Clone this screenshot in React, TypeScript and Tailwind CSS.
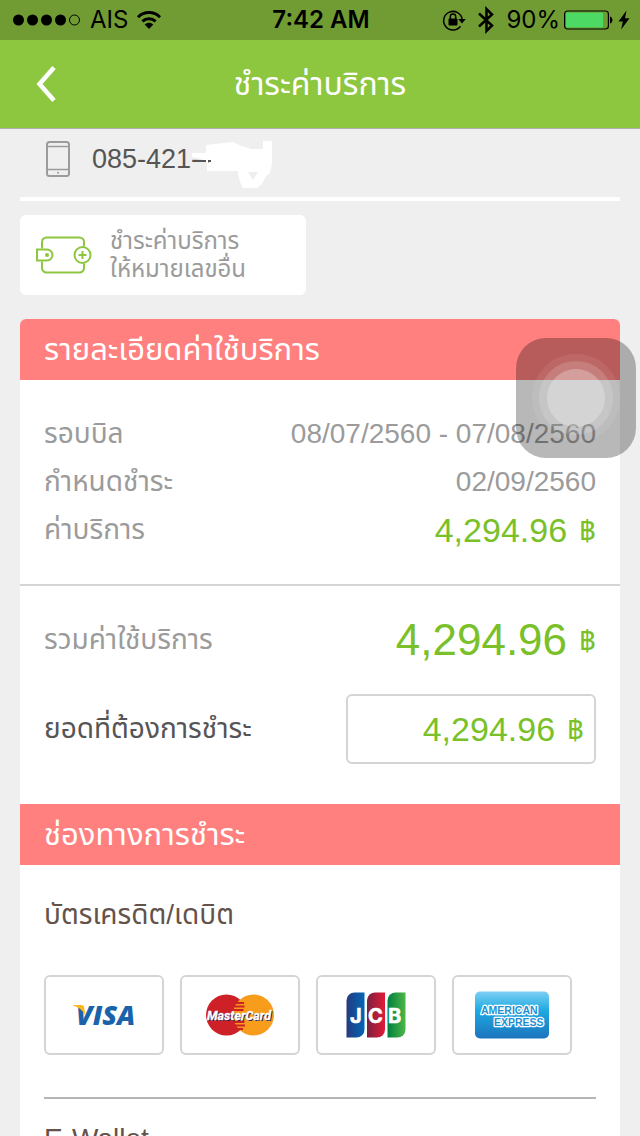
import { useState, type ReactNode } from 'react';

const sans = "font-['Liberation_Sans','Noto_Sans_Thai',sans-serif]";
const cardBox =
  'flex h-20 w-[120px] items-center justify-center rounded-md border-2 border-[#d4d4d4] bg-white';

function StatusBar() {
  return (
    <div className="grid h-10 shrink-0 grid-cols-[1fr_auto_1fr] items-center bg-[#719c33] pl-3 pr-2.5 font-['Inter',sans-serif] text-2xl text-black">
      <div className="flex items-center gap-2">
        <svg width="70" height="14" viewBox="0 0 70 14" aria-hidden="true">
          <circle cx="6.5" cy="7" r="5.5" />
          <circle cx="20.5" cy="7" r="5.5" />
          <circle cx="34.5" cy="7" r="5.5" />
          <circle cx="48.5" cy="7" r="5.5" />
          <circle cx="62.5" cy="7" r="5" fill="none" stroke="#000" />
        </svg>
        <span>AIS</span>
        <svg width="26" height="20" viewBox="0 0 26 20" aria-hidden="true">
          <g fill="none" stroke="#000" strokeWidth="3">
            <path d="M2 7.2C8.2 1 17.8 1 24 7.2" />
            <path d="M6.4 11.4c3.8-3.7 9.400-3.700 13.200 0" />
          </g>
          <path d="M13 19 8.700 14.400c2.500-2.300 6.100-2.300 8.600 0z" />
        </svg>
      </div>
      <span className="font-semibold">7:42 AM</span>
      <div className="flex items-center justify-end">
        <svg width="24" height="22" viewBox="0 0 24 22" aria-hidden="true">
          <path d="M18.500 17.200A9.300 9.300 0 1 1 20.200 10.500" fill="none" stroke="#000" strokeWidth="1.500" />
          <path d="M16.200 10h7.600L20 14.600z" />
          <rect x="6.500" y="9.500" width="9" height="7" rx="1" />
          <path d="M8.300 10V7.600a2.700 2.700 0 0 1 5.400 0V10" fill="none" stroke="#000" strokeWidth="1.500" />
        </svg>
        <svg className="ml-3" width="16" height="28" viewBox="0 0 16 28" fill="none" stroke="#000" strokeWidth="2.500" aria-hidden="true">
          <path d="M1 7.500 14 19.500 8.500 25V3L14 8.500 1 20.500" />
        </svg>
        <span className="ml-3">90%</span>
        <svg className="ml-1" width="50" height="20" viewBox="0 0 50 20" aria-hidden="true">
          <rect x="0.600" y="1" width="43.800" height="18" rx="3" fill="none" stroke="#000" strokeWidth="1.200" />
          <rect x="2" y="2.500" width="37" height="15" rx="1" fill="#4cd964" />
          <path d="M46 6.500c3.300 1 3.300 6 0 7z" />
        </svg>
        <svg className="ml-1" width="12" height="20" viewBox="0 0 12 20" aria-hidden="true">
          <path d="M8.500.5.5 11.500h4.300L3.200 19.500 11.500 8.200H7z" />
        </svg>
      </div>
    </div>
  );
}

function Row({ label, children }: { label: string; children: ReactNode }) {
  return (
    <div className="flex h-12 items-center justify-between">
      <dt>{label}</dt>
      <dd>{children}</dd>
    </div>
  );
}

function Baht() {
  return <span className="ml-3 text-[29px] leading-9 text-[#7ac129]">฿</span>;
}

function SectionTitle({ children }: { children: ReactNode }) {
  return (
    <h2 className="flex h-[61px] items-center bg-[#ff807e] px-6 text-[31px] leading-10 text-white">
      {children}
    </h2>
  );
}

function Visa() {
  return (
    <svg width="76" height="40" viewBox="-6 -8 76 40" role="img" aria-label="Visa">
      <text x="4" y="22" fontSize="27" className="font-['Open_Sans',sans-serif] font-extrabold italic" fill="#1a62a9">
        VISA
      </text>
      <path d="M1 2h8.500c1.600 0 2.300 1 2.600 2.300L13.500 13C11.500 8 7 4.500 1 2.600z" fill="#fbb81b" />
    </svg>
  );
}

function MasterCard() {
  return (
    <svg width="80" height="42" viewBox="-5 0 80 42" role="img" aria-label="MasterCard">
      <circle cx="21.500" cy="21" r="20.500" fill="#cd2027" />
      <circle cx="48.500" cy="21" r="20.500" fill="#f89c1c" />
      <path d="M31 9h8M29.500 12.500h10M28.500 16h10M28.500 28h11M30 31.500h10M32 35h6" stroke="#cd2027" strokeWidth="1.800" />
      <g fontSize="12.500" className="font-['Roboto',sans-serif] font-bold italic">
        <text x="3" y="26.500" fill="#1c1c50" aria-hidden="true">
          MasterCard
        </text>
        <text x="2" y="25.500" fill="#fff" stroke="#fff" strokeWidth="0.300">
          MasterCard
        </text>
      </g>
    </svg>
  );
}

function Jcb() {
  return (
    <svg width="60" height="46" viewBox="0 0 60 46" role="img" aria-label="JCB">
      <defs>
        <linearGradient id="jcb-blue">
          <stop stopColor="#273a80" />
          <stop offset="1" stopColor="#0066b5" />
        </linearGradient>
        <linearGradient id="jcb-red">
          <stop stopColor="#7b2140" />
          <stop offset="1" stopColor="#e01b38" />
        </linearGradient>
        <linearGradient id="jcb-green">
          <stop stopColor="#007f3f" />
          <stop offset="1" stopColor="#4db748" />
        </linearGradient>
      </defs>
      <path d="M8.500.5h10v37a8 8 0 0 1-8 8H.5v-37a8 8 0 0 1 8-8z" fill="url(#jcb-blue)" />
      <path d="M29 .5h10v37a8 8 0 0 1-8 8H21v-37a8 8 0 0 1 8-8z" fill="url(#jcb-red)" />
      <path d="M49.500.5h10v37a8 8 0 0 1-8 8h-10v-37a8 8 0 0 1 8-8z" fill="url(#jcb-green)" />
      <g fill="#fff" stroke="#fff" strokeWidth="0.600" fontSize="20" className="font-['Inter',sans-serif] font-bold">
        <text x="4" y="30.500">J</text>
        <text x="22" y="30.500">C</text>
        <text x="42" y="30.500">B</text>
      </g>
    </svg>
  );
}

function Amex() {
  return (
    <svg width="76" height="48" viewBox="0 0 76 48" role="img" aria-label="American Express">
      <defs>
        <linearGradient id="amex-fill" x2="0" y2="1">
          <stop stopColor="#7ecff3" />
          <stop offset="0.4" stopColor="#1eaae2" />
          <stop offset="1" stopColor="#1c74bd" />
        </linearGradient>
      </defs>
      <rect x="1" y="0.500" width="74" height="47" rx="5" fill="url(#amex-fill)" />
      <g
        fontSize="10.500"
        className="font-['Liberation_Sans',sans-serif] font-bold"
        fill="#1d8fd3"
        stroke="#fff"
        strokeWidth="2.500"
        strokeLinejoin="round"
        paintOrder="stroke"
      >
        <text x="7" y="22.500">AMERICAN</text>
        <text x="20" y="34.500">EXPRESS</text>
      </g>
    </svg>
  );
}

const cards = [
  { id: 'visa', logo: <Visa /> },
  { id: 'mastercard', logo: <MasterCard /> },
  { id: 'jcb', logo: <Jcb /> },
  { id: 'amex', logo: <Amex /> },
];

export default function App() {
  const [amount, setAmount] = useState('4,294.96');
  return (
    <div className={`relative flex h-screen flex-col overflow-hidden bg-[#efefef] ${sans}`}>
      <StatusBar />
      <header className="grid h-[89px] shrink-0 grid-cols-[80px_1fr_80px] items-center border-b border-[#b0b0b0] bg-[#8dc63f] text-white">
        <button type="button" aria-label="Back" className="flex h-full items-center pl-9">
          <svg width="20" height="36" viewBox="0 0 20 36" fill="none" stroke="#fff" strokeWidth="4.500" aria-hidden="true">
            <path d="M18 1.500 3.500 18 18 34.500" />
          </svg>
        </button>
        <h1 className="text-center text-[32px] leading-10">ชำระค่าบริการ</h1>
      </header>

      <main className="min-h-0 flex-1 overflow-y-auto px-5 [scrollbar-width:none]">
        <div className="flex h-[72px] items-center border-b-4 border-white pb-2 pl-[26px]">
          <svg width="24" height="36" viewBox="0 0 24 36" fill="none" stroke="#9b9b9b" aria-hidden="true">
            <rect x="1" y="1" width="22" height="34" rx="2.500" strokeWidth="2" />
            <path d="M1 5.500h22M1 28.500h22" strokeWidth="1.500" />
            <circle cx="12" cy="31.700" r="1" fill="#9b9b9b" stroke="none" />
          </svg>
          <span className="ml-[22px] text-[27px] leading-8 text-[#555]">085-421-</span>
          <svg className="-ml-2 mt-3" width="82" height="50" viewBox="0 0 82 50" aria-hidden="true">
            <path
              d="M0 13h14V5l18-2 9-1 6 3 12 4h12V1h9v22l-2 10-4 3-4 8-5 4H51l-3-6-2-8v-3H15v-8l-5-4-10-2z"
              fill="#fff"
            />
            <path d="M56 32h10l-5 8z" fill="#efefef" />
            <path d="M5 20h9v2H5zM16 20h3v2h-2l-1 1z" fill="#555" />
          </svg>
        </div>

        <button
          type="button"
          className="mt-3.5 flex h-20 w-[286px] items-center rounded-md bg-white pl-4 text-left text-[#9b9b9b]"
        >
          <svg width="56" height="38" viewBox="0 0 56 38" fill="none" stroke="#8dc63f" strokeWidth="2" aria-hidden="true">
            <path d="M6 12.500V6a4.500 4.500 0 0 1 4.500-4.500h33A4.500 4.500 0 0 1 48 6v4.500M48 27.500V32a4.500 4.500 0 0 1-4.500 4.500h-33A4.500 4.500 0 0 1 6 32v-6.500" />
            <path d="M1 13.500h10a5.500 5.500 0 0 1 0 11H1z" />
            <circle cx="11" cy="19" r="2" fill="#8dc63f" stroke="none" />
            <circle cx="46.500" cy="19" r="8" />
            <path d="M46.500 15v8M42.500 19h8" />
          </svg>
          <span className="ml-[18px] text-2xl leading-7">
            ชำระค่าบริการ
            <br />
            ให้หมายเลขอื่น
          </span>
        </button>

        <section className="mt-6 overflow-hidden rounded-t-md bg-white">
          <SectionTitle>รายละเอียดค่าใช้บริการ</SectionTitle>
          <dl className="border-b-2 border-[#d4d4d4] px-6 py-[30px] text-[28px] leading-9 text-[#9b9b9b]">
            <Row label="รอบบิล">08/07/2560 - 07/08/2560</Row>
            <Row label="กำหนดชำระ">02/09/2560</Row>
            <Row label="ค่าบริการ">
              <span className="flex items-center">
                <span className="text-[34px] text-[#7ac129]">4,294.96</span>
                <Baht />
              </span>
            </Row>
          </dl>
          <div className="flex h-[108px] items-center justify-between px-6 text-[28px] text-[#9b9b9b]">
            <span>รวมค่าใช้บริการ</span>
            <span className="flex items-center text-[#7ac129]">
              <span className="text-[44px]">4,294.96</span>
              <Baht />
            </span>
          </div>
          <div className="flex items-center justify-between px-6 pb-10 text-[28px]">
            <label htmlFor="amount" className="text-[#555]">
              ยอดที่ต้องการชำระ
            </label>
            <div className="flex h-[70px] w-[250px] items-center rounded-md border-2 border-[#d4d4d4] pr-2.5 text-[#7ac129]">
              <input
                id="amount"
                value={amount}
                onChange={(e) => setAmount(e.target.value)}
                inputMode="decimal"
                className="min-w-0 flex-1 bg-transparent text-right text-[34px] outline-none"
              />
              <Baht />
            </div>
          </div>

          <SectionTitle>ช่องทางการชำระ</SectionTitle>
          <div className="px-6 text-[#64534b]">
            <div className="border-b-2 border-[#b5b5b5] pb-[42px] pt-[30px]">
              <h3 className="text-[28px] leading-10">บัตรเครดิต/เดบิต</h3>
              <div className="mt-10 flex gap-4">
                {cards.map((card) => (
                  <button key={card.id} type="button" className={cardBox}>
                    {card.logo}
                  </button>
                ))}
              </div>
            </div>
            <h3 className="py-5 text-[28px] leading-10">E-Wallet</h3>
          </div>
        </section>
      </main>

      <button
        type="button"
        aria-label="AssistiveTouch"
        className="absolute right-1 top-[338px] flex size-[120px] items-center justify-center rounded-[30px] bg-black/28"
      >
        <span className="flex size-[88px] items-center justify-center rounded-full bg-white/8">
          <span className="flex size-[74px] items-center justify-center rounded-full bg-white/15">
            <span className="size-[58px] rounded-full bg-white/25" />
          </span>
        </span>
      </button>
    </div>
  );
}
